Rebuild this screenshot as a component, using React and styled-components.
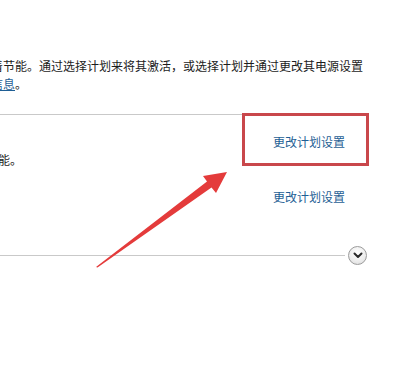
import styled, { createGlobalStyle } from 'styled-components';

const Global = createGlobalStyle`
  html, body {
    margin: 0;
    padding: 0;
    background: #ffffff;
  }
`;

const Page = styled.div`
  position: relative;
  width: 410px;
  height: 367px;
  overflow: hidden;
  background: #ffffff;
  font-family: "Noto Sans CJK SC", "Noto Sans", sans-serif;
  font-size: 12px;
  line-height: 18px;
  color: #1c1c1c;
`;

const Intro = styled.div`
  padding-top: 57px;
  margin-left: -9px;
  white-space: nowrap;
`;

const Line = styled.div`
  display: block;
`;

const Link = styled.a`
  color: #1f5f95;
  text-decoration: ${p => (p.$underline ? 'underline' : 'none')};
  cursor: pointer;
`;

const Divider = styled.div`
  height: 1px;
  width: ${p => p.$width}px;
  background: #c9c9c9;
  margin-top: ${p => p.$top}px;
`;

const PlanRow = styled.div`
  display: grid;
  grid-template-columns: 273px 1fr;
  margin-top: ${p => p.$top}px;
`;

const PlanText = styled.div`
  padding-top: ${p => p.$pad}px;
  margin-left: -2px;
  white-space: nowrap;
`;

const PlanAction = styled.div`
  white-space: nowrap;
`;

const FooterRow = styled.div`
  display: flex;
  align-items: center;
  gap: 3px;
  margin-top: ${p => p.$top}px;
`;

const FooterLine = styled.div`
  width: 345px;
  height: 1px;
  background: #c9c9c9;
`;

const Expander = styled.button`
  box-sizing: border-box;
  width: 19px;
  height: 19px;
  padding: 0;
  border-radius: 50%;
  border: 1px solid #9c9c9c;
  background: radial-gradient(circle at 50% 35%, #ffffff 0%, #ececec 60%, #d6d6d6 100%);
  display: flex;
  align-items: center;
  justify-content: center;
`;

const Highlight = styled.div`
  position: absolute;
  left: 242px;
  top: 113px;
  width: 127px;
  height: 53px;
  box-sizing: border-box;
  border: 3px solid #c9474b;
  pointer-events: none;
`;

const ArrowLayer = styled.svg`
  position: absolute;
  left: 0;
  top: 0;
  pointer-events: none;
`;

const Chevron = () => (
  <svg width="10" height="7" viewBox="0 0 10 7">
    <path d="M1.5 1.5 L5 5 L8.5 1.5" fill="none" stroke="#2a2a2a" strokeWidth="2" strokeLinecap="round" strokeLinejoin="round" />
  </svg>
);

export default function App() {
  return (
    <Page>
      <Global />
      <Intro>
        <Line>着节能。通过选择计划来将其激活，或选择计划并通过更改其电源设置</Line>
        <Line><Link $underline>信息</Link>。</Line>
      </Intro>

      <Divider $width={242} $top={21} />

      <PlanRow $top={18}>
        <PlanText $pad={18}>能。</PlanText>
        <PlanAction><Link>更改计划设置</Link></PlanAction>
      </PlanRow>

      <PlanRow $top={19}>
        <PlanText $pad={0}></PlanText>
        <PlanAction><Link>更改计划设置</Link></PlanAction>
      </PlanRow>

      <FooterRow $top={40}>
        <FooterLine />
        <Expander><Chevron /></Expander>
      </FooterRow>

      <Highlight />
      <ArrowLayer width="410" height="367" viewBox="0 0 410 367">
        <polygon
          points="96,267 207,181.5 203,176 227,172 216,193 211.5,187.5 97.5,267.5"
          fill="#e43b3b"
        />
      </ArrowLayer>
    </Page>
  );
}
